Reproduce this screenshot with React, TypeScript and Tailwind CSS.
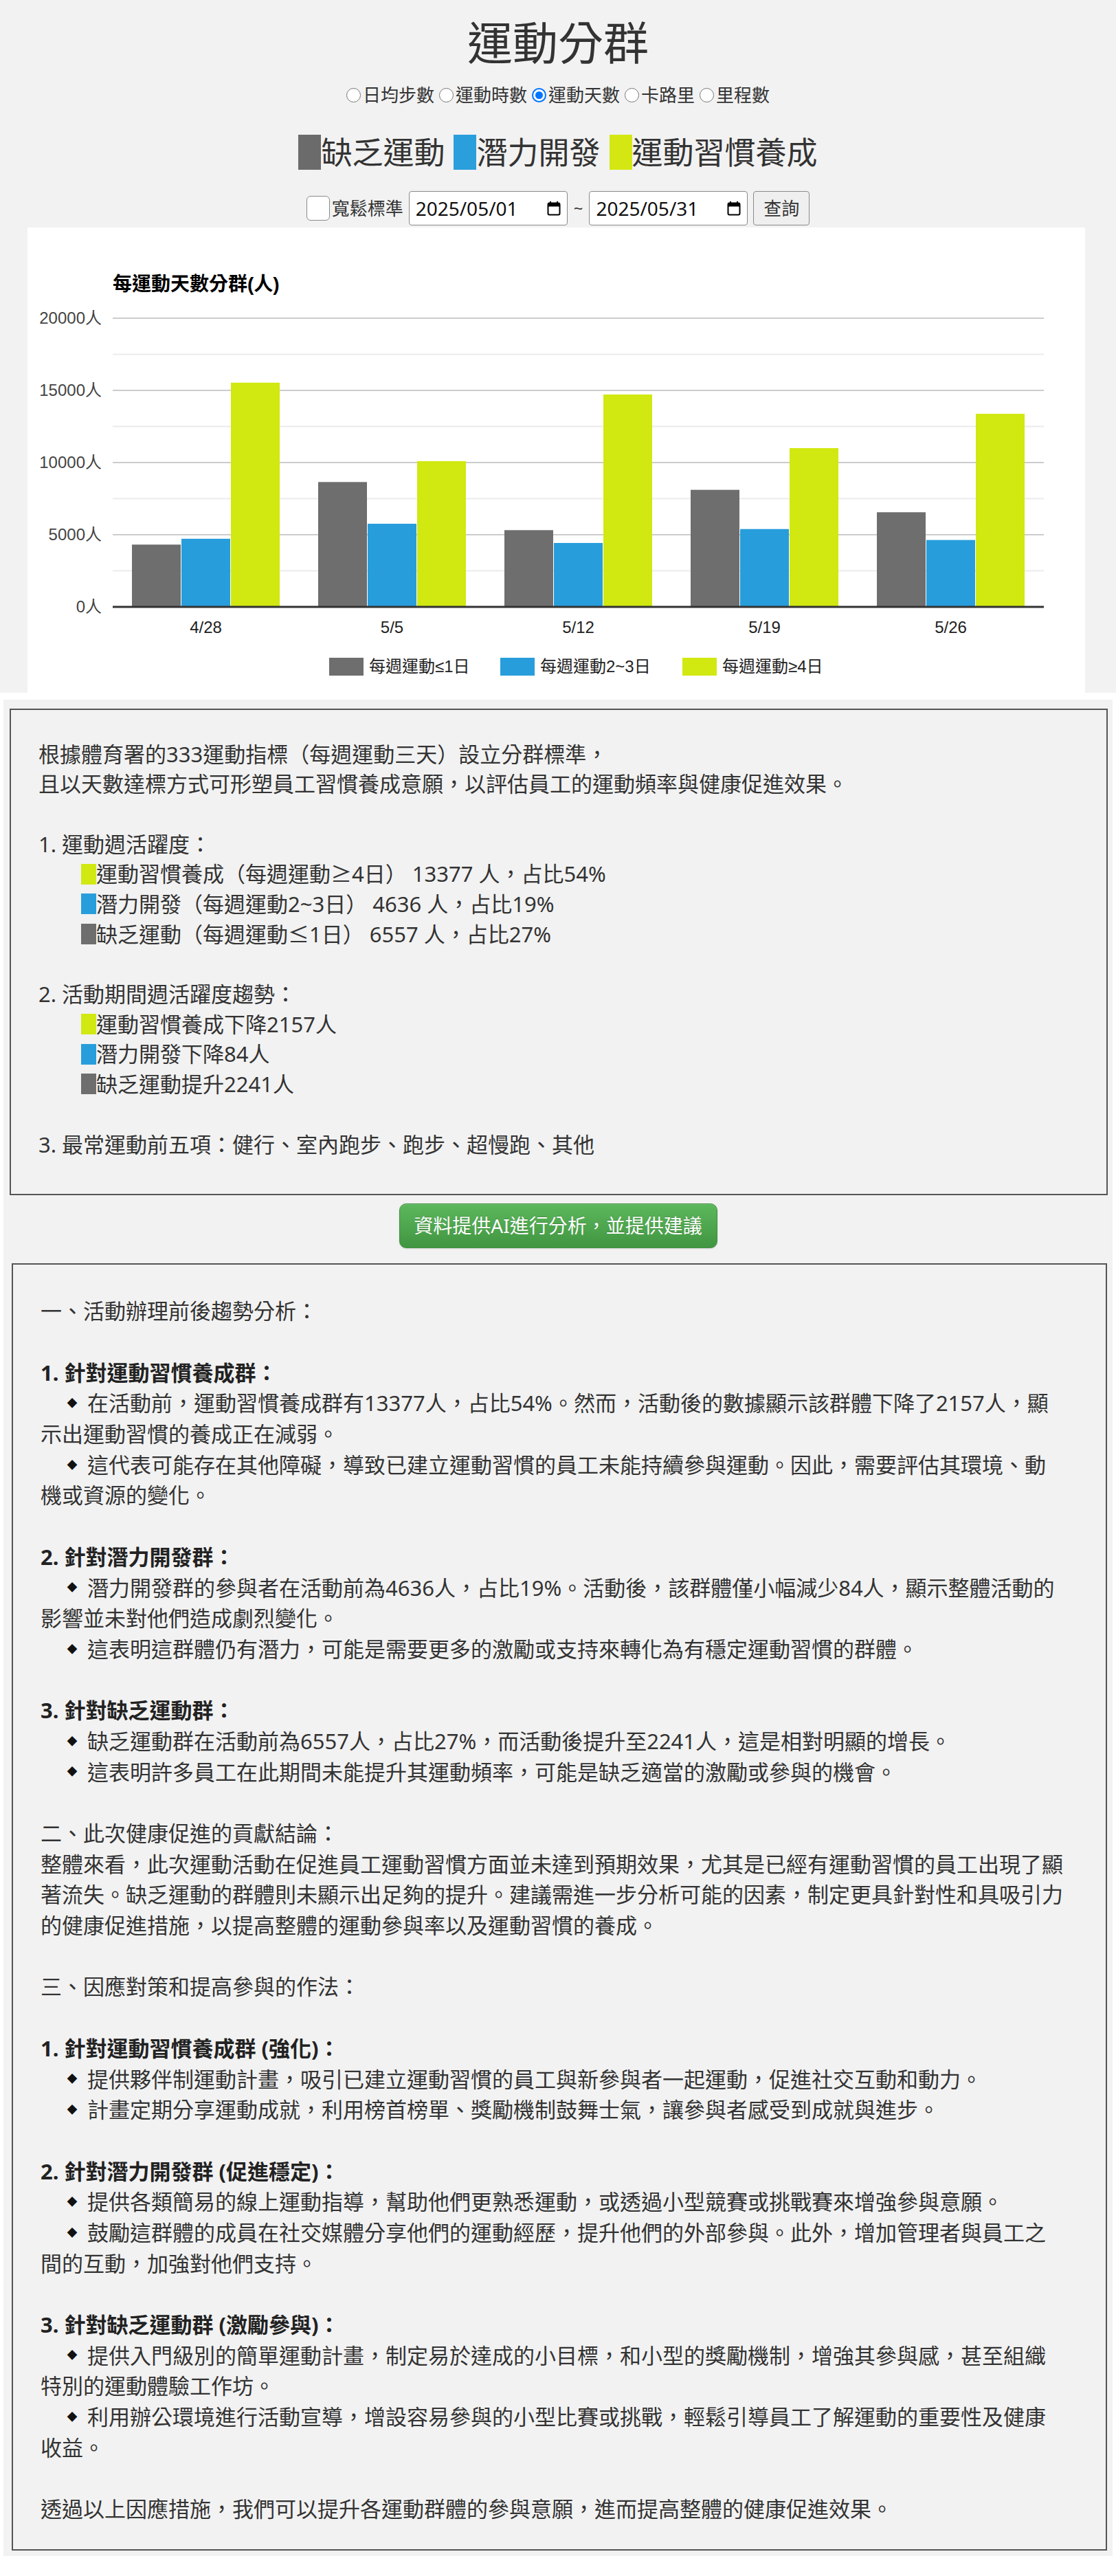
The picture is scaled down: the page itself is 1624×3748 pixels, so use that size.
import React from "react";

const GRAY = "#6e6e6e";
const BLUE = "#289ddb";
const GREEN = "#d1e811";

const weeks = [
  { label: "4/28", v: [4316, 4720, 15534] },
  { label: "5/5", v: [8650, 5760, 10100] },
  { label: "5/12", v: [5317, 4429, 14714] },
  { label: "5/19", v: [8110, 5393, 11000] },
  { label: "5/26", v: [6557, 4636, 13377] },
];

function Radio({ checked }: { checked?: boolean }) {
  if (checked) {
    return (
      <span className="mr-[3px] flex h-[21px] w-[21px] items-center justify-center rounded-full border-2 border-[#0075ff] bg-white">
        <span className="h-[11px] w-[11px] rounded-full bg-[#0075ff]" />
      </span>
    );
  }
  return <span className="mr-[3px] h-[21px] w-[21px] rounded-full border-[1.5px] border-[#767676] bg-white" />;
}

function CalendarIcon() {
  return (
    <svg width="20" height="22" viewBox="0 0 20 22">
      <path d="M5 1v4M15 1v4" stroke="#000" strokeWidth="2" />
      <rect x="1.5" y="3.5" width="17" height="17" rx="2" fill="none" stroke="#000" strokeWidth="2" />
      <rect x="1.5" y="3.5" width="17" height="5" fill="#000" />
    </svg>
  );
}

function DateBox({ value }: { value: string }) {
  return (
    <div className="flex h-[50px] w-[231px] items-center justify-between rounded-[4px] border border-[#8a8a8a] bg-white pl-[9px] pr-[9px] text-[28px] text-[#111]">
      <span>{value}</span>
      <CalendarIcon />
    </div>
  );
}

function Chart() {
  const left = 124;
  const right = 1479;
  const base = 552;
  const k = 420 / 20000;
  const gw = (right - left) / 5;
  const grid = [2500, 5000, 7500, 10000, 12500, 15000, 17500, 20000];
  const colors = [GRAY, BLUE, GREEN];
  const legend = [
    { c: GRAY, x: 439, t: "每週運動≤1日" },
    { c: BLUE, x: 688, t: "每週運動2~3日" },
    { c: GREEN, x: 953, t: "每週運動≥4日" },
  ];
  return (
    <svg width="1539" height="677" className="font-['Liberation_Sans','Noto_Sans_CJK_TC',sans-serif]">
      <text x={left} y={92} fontSize="28" fontWeight="bold" fill="#000">
        每運動天數分群(人)
      </text>
      {grid.map((g) => (
        <line
          key={g}
          x1={left}
          x2={right}
          y1={base - g * k}
          y2={base - g * k}
          stroke={g % 5000 === 0 ? "#cccccc" : "#ebebeb"}
          strokeWidth="2"
        />
      ))}
      {[0, 5000, 10000, 15000, 20000].map((g) => (
        <text key={g} x={108} y={base - g * k + 8} fontSize="24" fill="#444" textAnchor="end">
          {g}人
        </text>
      ))}
      {weeks.map((w, i) => {
        const gs = left + gw * i;
        return (
          <g key={w.label}>
            {w.v.map((v, j) => (
              <rect key={j} x={gs + 28 + j * 72} y={base - v * k} width="71" height={v * k} fill={colors[j]} />
            ))}
            <text x={gs + gw / 2} y={590} fontSize="24" fill="#222" textAnchor="middle">
              {w.label}
            </text>
          </g>
        );
      })}
      <line x1={left} x2={right} y1={base} y2={base} stroke="#333" strokeWidth="3" />
      {legend.map((l) => (
        <g key={l.t}>
          <rect x={l.x} y={626} width="50" height="26" fill={l.c} />
          <text x={l.x + 58} y={647} fontSize="24" fill="#222">
            {l.t}
          </text>
        </g>
      ))}
    </svg>
  );
}

function Swatch({ c }: { c: string }) {
  return <span className="h-[30px] w-[22px] shrink-0" style={{ backgroundColor: c }} />;
}

function L1({ children }: { children?: React.ReactNode }) {
  return <div className="flex h-[43.7px] items-center whitespace-nowrap">{children}</div>;
}

function SubItem({ c, text }: { c: string; text: string }) {
  return (
    <L1>
      <span className="w-[62px] shrink-0" />
      <Swatch c={c} />
      <span>{text}</span>
    </L1>
  );
}

type Line = [string, string?];

const analysis: Line[] = [
  ["p", "一、活動辦理前後趨勢分析："],
  ["blank"],
  ["h", "1. 針對運動習慣養成群："],
  ["b", "在活動前，運動習慣養成群有13377人，占比54%。然而，活動後的數據顯示該群體下降了2157人，顯"],
  ["p", "示出運動習慣的養成正在減弱。"],
  ["b", "這代表可能存在其他障礙，導致已建立運動習慣的員工未能持續參與運動。因此，需要評估其環境、動"],
  ["p", "機或資源的變化。"],
  ["blank"],
  ["h", "2. 針對潛力開發群："],
  ["b", "潛力開發群的參與者在活動前為4636人，占比19%。活動後，該群體僅小幅減少84人，顯示整體活動的"],
  ["p", "影響並未對他們造成劇烈變化。"],
  ["b", "這表明這群體仍有潛力，可能是需要更多的激勵或支持來轉化為有穩定運動習慣的群體。"],
  ["blank"],
  ["h", "3. 針對缺乏運動群："],
  ["b", "缺乏運動群在活動前為6557人，占比27%，而活動後提升至2241人，這是相對明顯的增長。"],
  ["b", "這表明許多員工在此期間未能提升其運動頻率，可能是缺乏適當的激勵或參與的機會。"],
  ["blank"],
  ["p", "二、此次健康促進的貢獻結論："],
  ["p", "整體來看，此次運動活動在促進員工運動習慣方面並未達到預期效果，尤其是已經有運動習慣的員工出現了顯"],
  ["p", "著流失。缺乏運動的群體則未顯示出足夠的提升。建議需進一步分析可能的因素，制定更具針對性和具吸引力"],
  ["p", "的健康促進措施，以提高整體的運動參與率以及運動習慣的養成。"],
  ["blank"],
  ["p", "三、因應對策和提高參與的作法："],
  ["blank"],
  ["h", "1. 針對運動習慣養成群 (強化)："],
  ["b", "提供夥伴制運動計畫，吸引已建立運動習慣的員工與新參與者一起運動，促進社交互動和動力。"],
  ["b", "計畫定期分享運動成就，利用榜首榜單、獎勵機制鼓舞士氣，讓參與者感受到成就與進步。"],
  ["blank"],
  ["h", "2. 針對潛力開發群 (促進穩定)："],
  ["b", "提供各類簡易的線上運動指導，幫助他們更熟悉運動，或透過小型競賽或挑戰賽來增強參與意願。"],
  ["b", "鼓勵這群體的成員在社交媒體分享他們的運動經歷，提升他們的外部參與。此外，增加管理者與員工之"],
  ["p", "間的互動，加強對他們支持。"],
  ["blank"],
  ["h", "3. 針對缺乏運動群 (激勵參與)："],
  ["b", "提供入門級別的簡單運動計畫，制定易於達成的小目標，和小型的獎勵機制，增強其參與感，甚至組織"],
  ["p", "特別的運動體驗工作坊。"],
  ["b", "利用辦公環境進行活動宣導，增設容易參與的小型比賽或挑戰，輕鬆引導員工了解運動的重要性及健康"],
  ["p", "收益。"],
  ["blank"],
  ["p", "透過以上因應措施，我們可以提升各運動群體的參與意願，進而提高整體的健康促進效果。"],
];

function AnalysisLine({ line }: { line: Line }) {
  const [kind, text] = line;
  if (kind === "blank") return <div className="h-[44.7px]" />;
  if (kind === "b") {
    return (
      <div className="flex h-[44.7px] items-center whitespace-nowrap">
        <span className="w-[31px] shrink-0" />
        <span className="flex w-[30px] shrink-0 justify-center text-[15px] leading-none text-[#111]">◆</span>
        <span className="w-[7px] shrink-0" />
        <span>{text}</span>
      </div>
    );
  }
  return (
    <div className={"flex h-[44.7px] items-center whitespace-nowrap" + (kind === "h" ? " font-bold text-[#222]" : "")}>
      {text}
    </div>
  );
}

export default function App() {
  const options = ["日均步數", "運動時數", "運動天數", "卡路里", "里程數"];
  return (
    <div className="min-h-[3748px] bg-white font-['Noto_Sans','Noto_Sans_CJK_TC',sans-serif] text-[#333]">
      <div className="flex h-[1008px] flex-col items-center bg-[#f2f2f2]">
        <h1 className="mt-[21px] text-[66px] leading-[80px] text-[#333]">運動分群</h1>

        <div className="mt-[19px] flex h-[36px] items-center text-[26px] leading-[36px]">
          {options.map((o, i) => (
            <label key={o} className={"flex items-center" + (i < options.length - 1 ? " mr-[7px]" : "")}>
              <Radio checked={i === 2} />
              <span>{o}</span>
            </label>
          ))}
        </div>

        <div className="mt-[40px] flex h-[51px] items-center text-[45px] leading-[51px]">
          <span className="h-[51px] w-[33px]" style={{ backgroundColor: "#6b6b6b" }} />
          <span>缺乏運動</span>
          <span className="w-[13px]" />
          <span className="h-[51px] w-[33px]" style={{ backgroundColor: "#2a9fdc" }} />
          <span>潛力開發</span>
          <span className="w-[13px]" />
          <span className="h-[51px] w-[33px]" style={{ backgroundColor: "#d4e713" }} />
          <span>運動習慣養成</span>
        </div>

        <div className="mt-[31px] flex h-[50px] items-center text-[26px]">
          <span className="h-[36px] w-[34px] rounded-[6px] border-[1.5px] border-[#8a8a8a] bg-white" />
          <span className="ml-[3px]">寬鬆標準</span>
          <span className="ml-[8px]">
            <DateBox value="2025/05/01" />
          </span>
          <span className="mx-[9px] text-[24px]">~</span>
          <DateBox value="2025/05/31" />
          <button className="ml-[8px] h-[50px] w-[82px] rounded-[4px] border border-[#8a8a8a] bg-[#efefef] text-[26px] text-[#333]">
            查詢
          </button>
        </div>

        <div className="mt-[3px] ml-[40px] h-[677px] w-[1539px] self-start bg-white">
          <Chart />
        </div>
      </div>

      <div className="h-[10px]" />

      <div className="mx-[5px] bg-[#f2f2f2] pb-[8px] pt-[13px] text-[31px]">
        <div className="ml-[9px] w-[1598px] border-2 border-[#555] pb-[50px] pl-[40px] pt-[42px]">
          <L1>根據體育署的333運動指標（每週運動三天）設立分群標準，</L1>
          <L1>且以天數達標方式可形塑員工習慣養成意願，以評估員工的運動頻率與健康促進效果。</L1>
          <L1 />
          <L1>1. 運動週活躍度：</L1>
          <SubItem c={GREEN} text="運動習慣養成（每週運動≥4日） 13377 人，占比54%" />
          <SubItem c={BLUE} text="潛力開發（每週運動2~3日） 4636 人，占比19%" />
          <SubItem c={GRAY} text="缺乏運動（每週運動≤1日） 6557 人，占比27%" />
          <L1 />
          <L1>2. 活動期間週活躍度趨勢：</L1>
          <SubItem c={GREEN} text="運動習慣養成下降2157人" />
          <SubItem c={BLUE} text="潛力開發下降84人" />
          <SubItem c={GRAY} text="缺乏運動提升2241人" />
          <L1 />
          <L1>3. 最常運動前五項：健行、室內跑步、跑步、超慢跑、其他</L1>
        </div>

        <div className="mt-[12px] flex justify-center">
          <button className="h-[65px] w-[463px] rounded-[10px] border border-[#3e8f3e] bg-gradient-to-b from-[#5cb85c] to-[#419641] text-[28px] text-white shadow-[inset_0_1px_0_rgba(255,255,255,0.15),0_1px_2px_rgba(0,0,0,0.15)] [text-shadow:0_-1px_0_rgba(0,0,0,0.2)]">
            資料提供AI進行分析，並提供建議
          </button>
        </div>

        <div className="ml-[12px] mt-[22px] w-[1594px] border-2 border-[#555] pb-[36px] pl-[40px] pt-[45.6px]">
          {analysis.map((l, i) => (
            <AnalysisLine key={i} line={l} />
          ))}
        </div>
      </div>
    </div>
  );
}
